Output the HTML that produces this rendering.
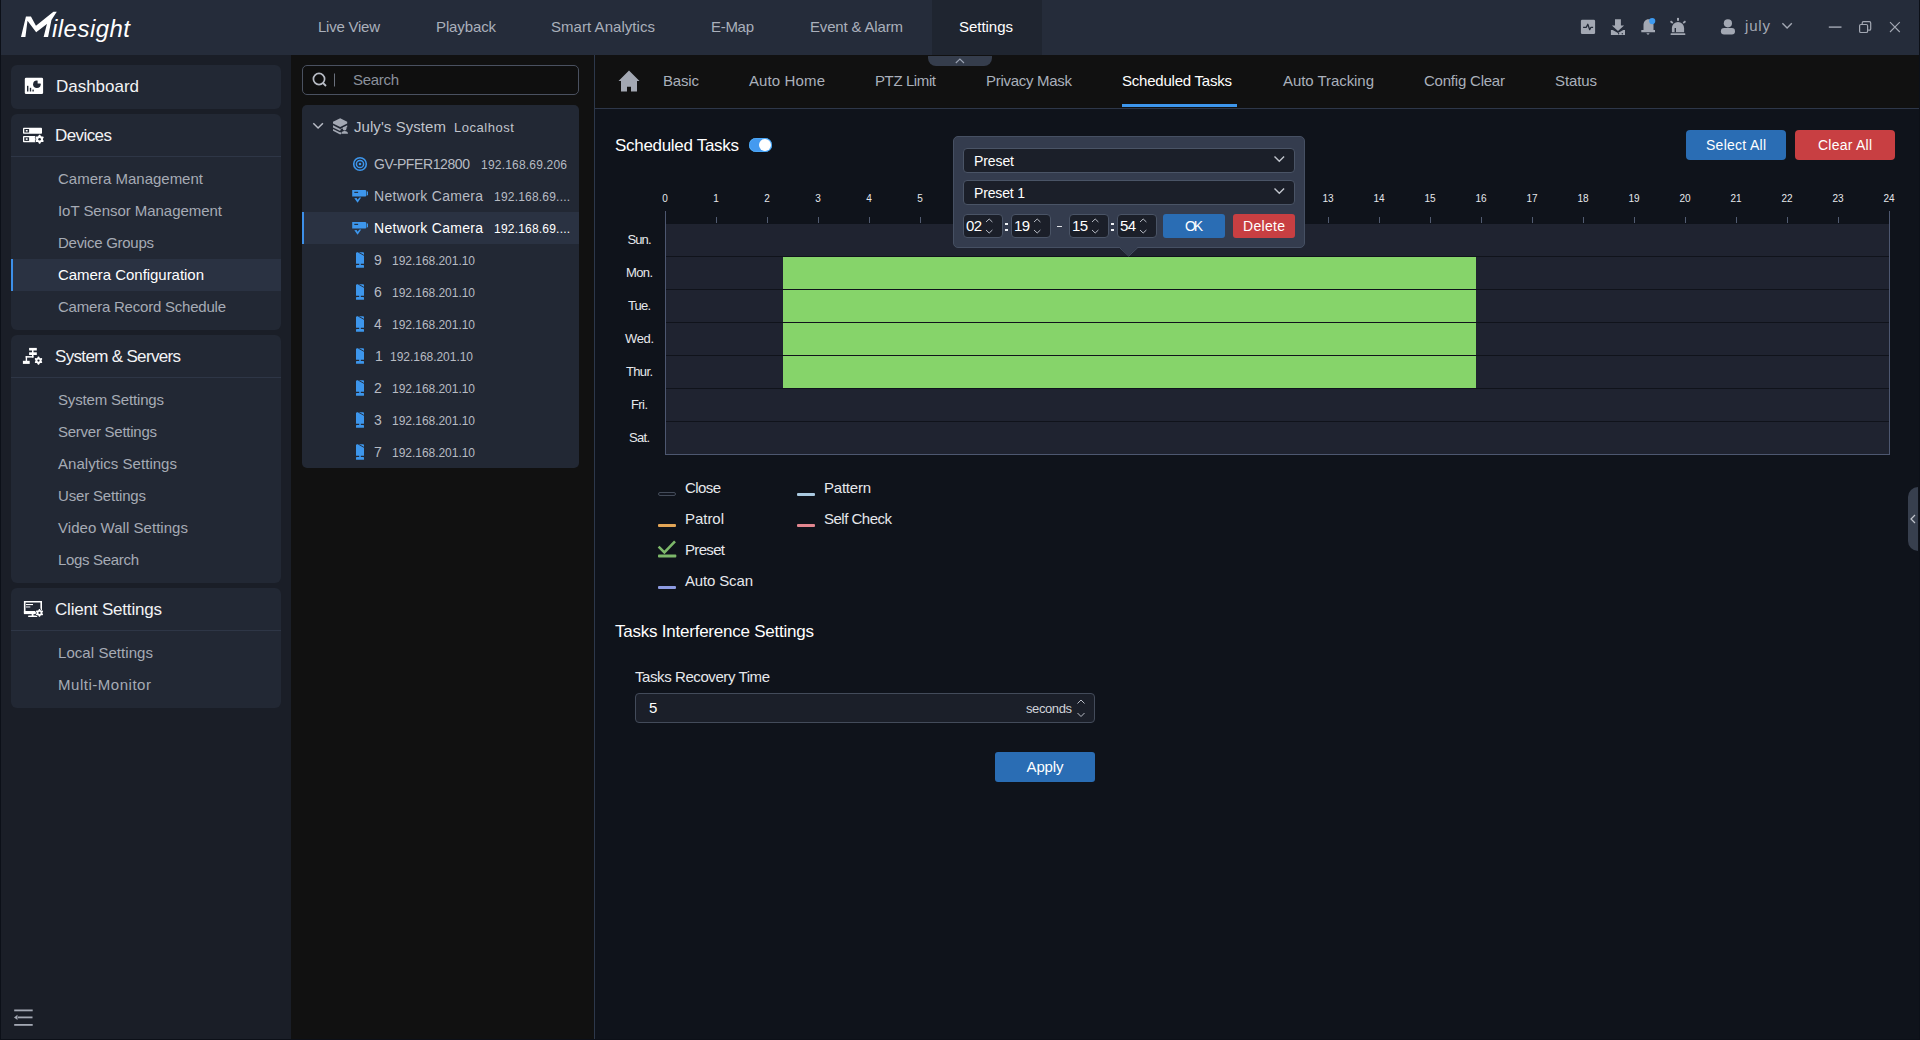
<!DOCTYPE html>
<html><head><meta charset="utf-8">
<style>
*{margin:0;padding:0;box-sizing:border-box}
html,body{width:1920px;height:1040px;overflow:hidden;background:#0f131b;font-family:"Liberation Sans",sans-serif}
.a{position:absolute}
.t{position:absolute;white-space:nowrap;line-height:1}
svg{overflow:visible}
</style></head><body>
<div class="a" style="left:0px;top:0px;width:1920px;height:55px;background:#252c3a;"></div>
<div class="a" style="left:932px;top:0px;width:110px;height:55px;background:#1f2530;"></div>
<div class="a" style="left:0px;top:55px;width:291px;height:985px;background:#1a1e27;"></div>
<div class="a" style="left:291px;top:55px;width:303px;height:985px;background:#111111;"></div>
<div class="a" style="left:594px;top:55px;width:1px;height:985px;background:#2d384b;"></div>
<div class="a" style="left:595px;top:55px;width:1325px;height:53px;background:#111111;"></div>
<div class="a" style="left:595px;top:108px;width:1325px;height:1px;background:#2e3749;"></div>
<svg class="a" style="left:15px;top:5px" width="125" height="45" viewBox="0 0 1920 691">
<path d="M92 490 L168 175 L245 175 L322 318 L590 105 L642 105 L560 232 L508 490 L440 490 L490 290 L325 418 L192 240 L160 490Z" fill="#ffffff"/>
</svg>
<div class="t" style="left:52.00px;top:17px;font-size:24px;color:#ffffff;letter-spacing:0.473px;font-style:italic;">ilesight</div>
<div class="t" style="left:318.00px;top:19px;font-size:15px;color:#aab0bb;letter-spacing:-0.240px;">Live View</div>
<div class="t" style="left:436.00px;top:19px;font-size:15px;color:#aab0bb;letter-spacing:-0.123px;">Playback</div>
<div class="t" style="left:551.00px;top:19px;font-size:15px;color:#aab0bb;letter-spacing:0.045px;">Smart Analytics</div>
<div class="t" style="left:711.00px;top:19px;font-size:15px;color:#aab0bb;letter-spacing:-0.297px;">E-Map</div>
<div class="t" style="left:810.00px;top:19px;font-size:15px;color:#aab0bb;letter-spacing:-0.171px;">Event &amp; Alarm</div>
<div class="t" style="left:959.00px;top:19px;font-size:15px;color:#ffffff;letter-spacing:-0.029px;">Settings</div>
<svg class="a" style="left:1570px;top:12px" width="130" height="30" viewBox="1570 12 130 30">
<rect x="1580.9" y="19.8" width="14.2" height="14.2" rx="1.3" fill="#a3a8b3"/>
<polyline points="1583.1,27.3 1586.3,27.3 1587.8,24.3 1589.7,29.7 1591,27.3 1593.1,27.3" fill="none" stroke="#252c3a" stroke-width="1.3" stroke-linejoin="round"/>
<path d="M1615 19.2 h5.9 v6.2 h3.2 l-6.1 5.6 l-6.1 -5.6 h3.1z" fill="#a3a8b3"/>
<path d="M1610.9 30.1 h1.8 l5.3 3.0 l5.3 -3.0 h1.7 v4.9 h-14.1z" fill="#a3a8b3"/>
<circle cx="1618.6" cy="33.7" r="0.7" fill="#252c3a"/><circle cx="1622.3" cy="33.7" r="0.7" fill="#252c3a"/>
<path d="M1648.5 19.3 c-3 0 -5 2.5 -5 6 v4.8 h-2.2 v2.2 h13.7 v-2.2 h-1.5 v-5 c0 -3.4 -2 -5.8 -5 -5.8z" fill="#a3a8b3"/>
<path d="M1646.3 33.2 h3.4 l-1.7 1.8z" fill="#a3a8b3"/>
<circle cx="1652.2" cy="21.1" r="3.1" fill="#3d9af0"/>
<path d="M1671.9 32.3 v-4.2 a6.1 6.1 0 0 1 12.2 0 v4.2z" fill="#a3a8b3"/>
<rect x="1674.6" y="28" width="1.4" height="4.3" fill="#252c3a"/>
<rect x="1670.6" y="33.2" width="14.7" height="1.8" rx="0.5" fill="#a3a8b3"/>
<rect x="1677" y="17.9" width="2" height="2.9" fill="#a3a8b3"/>
<path d="M1670.5 21.3 l2.3 1.7 M1685.5 21.3 l-2.3 1.7" stroke="#a3a8b3" stroke-width="1.7"/>
</svg>
<svg class="a" style="left:1710px;top:12px" width="200" height="30" viewBox="1710 12 200 30">
<circle cx="1727.9" cy="23.3" r="4.1" fill="#a3a8b3"/>
<rect x="1720.9" y="28.1" width="14.1" height="6.4" rx="3.2" fill="#a3a8b3"/>
<path d="M1782.4 23.3 l4.7 4.7 l4.7 -4.7" fill="none" stroke="#a3a8b3" stroke-width="1.4"/>
<rect x="1828.8" y="26.4" width="12.7" height="1.4" fill="#a3a8b3"/>
<rect x="1859.6" y="24.5" width="8" height="8" rx="1.3" fill="none" stroke="#a3a8b3" stroke-width="1.2"/>
<path d="M1862.2 23.9 v-0.9 c0 -0.8 0.6 -1.3 1.3 -1.3 h5.9 c0.8 0 1.3 0.6 1.3 1.3 v5.9 c0 0.8 -0.6 1.3 -1.3 1.3 h-1.2" fill="none" stroke="#a3a8b3" stroke-width="1.2"/>
<path d="M1890 22.2 l9.8 9.8 M1899.8 22.2 l-9.8 9.8" stroke="#a3a8b3" stroke-width="1.1"/>
</svg>
<div class="t" style="left:1745.00px;top:18px;font-size:15px;color:#a3a8b3;letter-spacing:0.833px;">july</div>
<div class="a" style="left:11px;top:65px;width:270px;height:44px;background:#222834;border-radius:6px;"></div>
<div class="a" style="left:11px;top:114px;width:270px;height:216px;background:#222834;border-radius:6px;"></div>
<div class="a" style="left:11px;top:156px;width:270px;height:1px;background:#2e3646;"></div>
<div class="a" style="left:11px;top:335px;width:270px;height:248px;background:#222834;border-radius:6px;"></div>
<div class="a" style="left:11px;top:377px;width:270px;height:1px;background:#2e3646;"></div>
<div class="a" style="left:11px;top:588px;width:270px;height:120px;background:#222834;border-radius:6px;"></div>
<div class="a" style="left:11px;top:630px;width:270px;height:1px;background:#2e3646;"></div>
<div class="a" style="left:11px;top:259px;width:270px;height:32px;background:#2a3242;"></div>
<div class="a" style="left:11px;top:259px;width:2px;height:32px;background:#3d8fe8;"></div>
<div class="t" style="left:56.00px;top:78px;font-size:17px;color:#f2f3f5;letter-spacing:-0.020px;">Dashboard</div>
<div class="t" style="left:55.00px;top:127px;font-size:17px;color:#f2f3f5;letter-spacing:-0.578px;">Devices</div>
<div class="t" style="left:55.00px;top:348px;font-size:17px;color:#f2f3f5;letter-spacing:-0.668px;">System &amp; Servers</div>
<div class="t" style="left:55.00px;top:601px;font-size:17px;color:#f2f3f5;letter-spacing:-0.186px;">Client Settings</div>
<div class="t" style="left:58.00px;top:171px;font-size:15px;color:#a6abb5;letter-spacing:-0.007px;">Camera Management</div>
<div class="t" style="left:58.00px;top:203px;font-size:15px;color:#a6abb5;letter-spacing:-0.043px;">IoT Sensor Management</div>
<div class="t" style="left:58.00px;top:235px;font-size:15px;color:#a6abb5;letter-spacing:-0.268px;">Device Groups</div>
<div class="t" style="left:58.00px;top:267px;font-size:15px;color:#ffffff;letter-spacing:-0.040px;">Camera Configuration</div>
<div class="t" style="left:58.00px;top:299px;font-size:15px;color:#a6abb5;letter-spacing:-0.219px;">Camera Record Schedule</div>
<div class="t" style="left:58.00px;top:392px;font-size:15px;color:#a6abb5;letter-spacing:-0.171px;">System Settings</div>
<div class="t" style="left:58.00px;top:424px;font-size:15px;color:#a6abb5;letter-spacing:-0.254px;">Server Settings</div>
<div class="t" style="left:58.00px;top:456px;font-size:15px;color:#a6abb5;letter-spacing:0.036px;">Analytics Settings</div>
<div class="t" style="left:58.00px;top:488px;font-size:15px;color:#a6abb5;letter-spacing:-0.171px;">User Settings</div>
<div class="t" style="left:58.00px;top:520px;font-size:15px;color:#a6abb5;letter-spacing:0.043px;">Video Wall Settings</div>
<div class="t" style="left:58.00px;top:552px;font-size:15px;color:#a6abb5;letter-spacing:-0.323px;">Logs Search</div>
<div class="t" style="left:58.00px;top:645px;font-size:15px;color:#a6abb5;letter-spacing:0.059px;">Local Settings</div>
<div class="t" style="left:58.00px;top:677px;font-size:15px;color:#a6abb5;letter-spacing:0.525px;">Multi-Monitor</div>
<svg class="a" style="left:20px;top:74px" width="30" height="24" viewBox="20 74 30 24"><rect x="24.8" y="77.7" width="18.3" height="16.3" rx="1.3" fill="#ffffff"/>
<rect x="27" y="85.8" width="1.4" height="5.7" fill="#222834"/><rect x="29.8" y="87.8" width="1.4" height="3.7" fill="#222834"/><rect x="32.4" y="89.6" width="1.4" height="1.9" fill="#222834"/>
<circle cx="36.9" cy="84.3" r="3.8" fill="#222834"/>
<path d="M37.6 83.6 v-3.6 a3.6 3.6 0 0 1 3.6 3.6z" fill="#ffffff"/></svg>
<svg class="a" style="left:20px;top:124px" width="30" height="24" viewBox="20 124 30 24"><rect x="23" y="127.7" width="19" height="6" rx="0.8" fill="#ffffff"/>
<rect x="24.3" y="129" width="4.8" height="3.5" fill="#222834"/><rect x="25.8" y="130" width="1.8" height="1.5" fill="#ffffff"/>
<rect x="23" y="136" width="13" height="6.2" rx="0.8" fill="#ffffff"/>
<rect x="24.3" y="137.3" width="4.8" height="3.6" fill="#222834"/><rect x="25.8" y="138.3" width="1.8" height="1.6" fill="#ffffff"/>
<polygon points="39.01,134.74 40.19,134.74 40.90,136.06 41.67,136.50 43.17,136.46 43.76,137.48 42.97,138.76 42.97,139.64 43.76,140.92 43.17,141.94 41.67,141.90 40.90,142.34 40.19,143.66 39.01,143.66 38.30,142.34 37.53,141.90 36.03,141.94 35.44,140.92 36.23,139.64 36.23,138.76 35.44,137.48 36.03,136.46 37.53,136.50 38.30,136.06" fill="#ffffff" stroke="#222834" stroke-width="1.2" paint-order="stroke"/><circle cx="39.6" cy="139.2" r="1.3" fill="#222834"/></svg>
<svg class="a" style="left:20px;top:344px" width="30" height="24" viewBox="20 344 30 24"><rect x="29.1" y="347.9" width="7.7" height="2.6" fill="#ffffff"/>
<rect x="29.1" y="352.3" width="7.7" height="2.7" fill="#ffffff"/>
<rect x="32" y="350" width="1.5" height="7.5" fill="#ffffff"/>
<rect x="25.7" y="356.1" width="7.8" height="1.5" fill="#ffffff"/>
<rect x="25.7" y="356.1" width="1.4" height="5" fill="#ffffff"/>
<rect x="22.9" y="360.8" width="6.8" height="3.1" fill="#ffffff"/>
<polygon points="37.96,356.54 39.04,356.54 39.69,357.74 40.39,358.14 41.75,358.10 42.29,359.03 41.57,360.20 41.57,361.00 42.29,362.17 41.75,363.10 40.39,363.06 39.69,363.46 39.04,364.66 37.96,364.66 37.31,363.46 36.61,363.06 35.25,363.10 34.71,362.17 35.43,361.00 35.43,360.20 34.71,359.03 35.25,358.10 36.61,358.14 37.31,357.74" fill="#ffffff" stroke="#222834" stroke-width="1.2" paint-order="stroke"/><circle cx="38.5" cy="360.6" r="1.1" fill="#222834"/></svg>
<svg class="a" style="left:20px;top:598px" width="30" height="24" viewBox="20 598 30 24"><path d="M24.7 601.7 h16.5 v10.5 h-16.5z" fill="none" stroke="#ffffff" stroke-width="1.6"/>
<rect x="23.9" y="611" width="18" height="3.1" fill="#ffffff"/>
<rect x="26" y="604" width="7" height="1.1" fill="#ffffff"/><rect x="26" y="606.3" width="4.3" height="1.3" fill="#c8cbd2"/>
<rect x="31.7" y="614" width="1.8" height="2" fill="#ffffff"/><rect x="28.1" y="615.6" width="9.1" height="1.4" rx="0.6" fill="#ffffff"/>
<polygon points="38.99,609.03 40.01,609.03 40.61,610.22 41.27,610.60 42.59,610.53 43.10,611.41 42.38,612.52 42.38,613.28 43.10,614.39 42.59,615.27 41.27,615.20 40.61,615.58 40.01,616.77 38.99,616.77 38.39,615.58 37.73,615.20 36.41,615.27 35.90,614.39 36.62,613.28 36.62,612.52 35.90,611.41 36.41,610.53 37.73,610.60 38.39,610.22" fill="#ffffff" stroke="#222834" stroke-width="1.2" paint-order="stroke"/><circle cx="39.5" cy="612.9" r="1.1" fill="#222834"/></svg>
<svg class="a" style="left:12px;top:1006px" width="24" height="22" viewBox="0 0 24 22">
<rect x="2.2" y="3.5" width="18.5" height="1.8" fill="#a3a8b3"/>
<rect x="6" y="10.5" width="14.5" height="1.8" fill="#a3a8b3"/>
<path d="M2 11.4 l3.5 -2.6 v5.2z" fill="#a3a8b3"/>
<rect x="2.2" y="18" width="18.5" height="1.8" fill="#a3a8b3"/>
</svg>
<div class="a" style="left:302px;top:65px;width:277px;height:30px;background:#0f0f0f;border:1px solid #4a5160;border-radius:5px;"></div>
<svg class="a" style="left:310px;top:70px" width="30" height="20" viewBox="0 0 30 20">
<circle cx="9" cy="9" r="5.6" fill="none" stroke="#b8bcc5" stroke-width="1.7"/>
<path d="M13 13 l3 3" stroke="#b8bcc5" stroke-width="1.8"/>
<rect x="24" y="3.5" width="1" height="13" fill="#6a707c"/>
</svg>
<div class="t" style="left:353.00px;top:72px;font-size:15px;color:#8b919c;letter-spacing:-0.306px;">Search</div>
<div class="a" style="left:302px;top:105px;width:277px;height:363px;background:#222834;border-radius:5px;"></div>
<div class="a" style="left:302px;top:212px;width:277px;height:32px;background:#2a3242;"></div>
<div class="a" style="left:302px;top:212px;width:2px;height:32px;background:#3d8fe8;"></div>
<svg class="a" style="left:308px;top:116px" width="44" height="20" viewBox="308 116 44 20"><path d="M313.3 123.2 l4.8 4.8 l4.8 -4.8" fill="none" stroke="#b8bcc5" stroke-width="1.5"/>
<path d="M333 121.8 l7.2 -3.6 l7 3.6 v1.6 l-7 3.6 l-7.2 -3.6z" fill="#a3a8b3"/>
<path d="M333 125.3 l7.2 3.6 l7 -3.6 v2 l-3 1.5 a2.6 2.6 0 0 0 -4 2 l-0 0.2 l-7.2 -3.6z" fill="#a3a8b3"/>
<path d="M333 128.9 l7.2 3.6 l0.8 -0.4 v2 l-0.8 0.3 l-7.2 -3.6z" fill="#a3a8b3"/>
<circle cx="344.6" cy="128.6" r="1.9" fill="#a3a8b3"/>
<path d="M341.3 133.8 c0 -2 1.3 -2.9 3.3 -2.9 c2 0 3.4 0.9 3.4 2.9z" fill="#a3a8b3"/></svg>
<div class="t" style="left:354.00px;top:119px;font-size:15px;color:#c0c4cc;letter-spacing:0.065px;">July's System</div>
<div class="t" style="left:454.00px;top:121px;font-size:13px;color:#c0c4cc;letter-spacing:0.541px;">Localhost</div>
<div class="t" style="left:374.00px;top:157px;font-size:14px;color:#b7bbc3;letter-spacing:-0.398px;">GV-PFER12800</div>
<div class="t" style="left:481.00px;top:159px;font-size:12px;color:#b7bbc3;letter-spacing:0.202px;">192.168.69.206</div>
<svg class="a" style="left:351px;top:156px" width="18" height="16" viewBox="0 0 18 16">
<circle cx="9" cy="8" r="6.3" fill="none" stroke="#3d96ec" stroke-width="1.6"/>
<circle cx="9" cy="8" r="3.6" fill="none" stroke="#3d96ec" stroke-width="1.5"/>
<circle cx="9" cy="8" r="1.3" fill="#3d96ec"/>
</svg>
<svg class="a" style="left:350px;top:189px" width="20" height="16" viewBox="350 189 20 16">
<path d="M352.2 190.1 h13.3 l0.8 0.7 v5.2 l-0.8 0.6 h-13.3z" fill="#3d96ec"/>
<rect x="366.8" y="191.5" width="1.2" height="3.8" fill="#3d96ec"/>
<rect x="354.3" y="191.8" width="3.8" height="1.1" fill="#222834"/>
<path d="M354.3 198.3 l2.3 -0.4 l0.9 1.9 l2 -2.2 l1.7 -0.2 l-3.6 5.4z" fill="#3d96ec"/>
</svg>
<div class="t" style="left:374.00px;top:189px;font-size:14px;color:#b7bbc3;letter-spacing:0.309px;">Network Camera</div>
<div class="t" style="left:494.00px;top:191px;font-size:12px;color:#b7bbc3;letter-spacing:0.204px;">192.168.69....</div>
<svg class="a" style="left:350px;top:221px" width="20" height="16" viewBox="350 189 20 16">
<path d="M352.2 190.1 h13.3 l0.8 0.7 v5.2 l-0.8 0.6 h-13.3z" fill="#3d96ec"/>
<rect x="366.8" y="191.5" width="1.2" height="3.8" fill="#3d96ec"/>
<rect x="354.3" y="191.8" width="3.8" height="1.1" fill="#222834"/>
<path d="M354.3 198.3 l2.3 -0.4 l0.9 1.9 l2 -2.2 l1.7 -0.2 l-3.6 5.4z" fill="#3d96ec"/>
</svg>
<div class="t" style="left:374.00px;top:221px;font-size:14px;color:#ffffff;letter-spacing:0.309px;">Network Camera</div>
<div class="t" style="left:494.00px;top:223px;font-size:12px;color:#ffffff;letter-spacing:0.204px;">192.168.69....</div>
<svg class="a" style="left:350px;top:250px" width="20" height="20" viewBox="350 250 20 20"><path d="M356 252.8 l1.2 -0.6 h5.6 c0.7 0 1.2 0.5 1.2 1.2 v10.4 h-8z" fill="#3d96ec"/>
<path d="M358.2 252.1 l5.8 3.3" stroke="#222834" stroke-width="0.9"/>
<rect x="359.2" y="263" width="1.6" height="2.2" fill="#3d96ec"/>
<rect x="356" y="265" width="8" height="2.8" rx="0.6" fill="#3d96ec"/></svg>
<div class="t" style="left:374.00px;top:253px;font-size:14px;color:#b7bbc3;">9</div>
<div class="t" style="left:392.00px;top:255px;font-size:12px;color:#b7bbc3;letter-spacing:-0.029px;">192.168.201.10</div>
<svg class="a" style="left:350px;top:282px" width="20" height="20" viewBox="350 282 20 20"><path d="M356 284.8 l1.2 -0.6 h5.6 c0.7 0 1.2 0.5 1.2 1.2 v10.4 h-8z" fill="#3d96ec"/>
<path d="M358.2 284.1 l5.8 3.3" stroke="#222834" stroke-width="0.9"/>
<rect x="359.2" y="295" width="1.6" height="2.2" fill="#3d96ec"/>
<rect x="356" y="297" width="8" height="2.8" rx="0.6" fill="#3d96ec"/></svg>
<div class="t" style="left:374.00px;top:285px;font-size:14px;color:#b7bbc3;">6</div>
<div class="t" style="left:392.00px;top:287px;font-size:12px;color:#b7bbc3;letter-spacing:-0.029px;">192.168.201.10</div>
<svg class="a" style="left:350px;top:314px" width="20" height="20" viewBox="350 314 20 20"><path d="M356 316.8 l1.2 -0.6 h5.6 c0.7 0 1.2 0.5 1.2 1.2 v10.4 h-8z" fill="#3d96ec"/>
<path d="M358.2 316.1 l5.8 3.3" stroke="#222834" stroke-width="0.9"/>
<rect x="359.2" y="327" width="1.6" height="2.2" fill="#3d96ec"/>
<rect x="356" y="329" width="8" height="2.8" rx="0.6" fill="#3d96ec"/></svg>
<div class="t" style="left:374.00px;top:317px;font-size:14px;color:#b7bbc3;">4</div>
<div class="t" style="left:392.00px;top:319px;font-size:12px;color:#b7bbc3;letter-spacing:-0.029px;">192.168.201.10</div>
<svg class="a" style="left:350px;top:346px" width="20" height="20" viewBox="350 346 20 20"><path d="M356 348.8 l1.2 -0.6 h5.6 c0.7 0 1.2 0.5 1.2 1.2 v10.4 h-8z" fill="#3d96ec"/>
<path d="M358.2 348.1 l5.8 3.3" stroke="#222834" stroke-width="0.9"/>
<rect x="359.2" y="359" width="1.6" height="2.2" fill="#3d96ec"/>
<rect x="356" y="361" width="8" height="2.8" rx="0.6" fill="#3d96ec"/></svg>
<div class="t" style="left:375.00px;top:349px;font-size:14px;color:#b7bbc3;">1</div>
<div class="t" style="left:390.00px;top:351px;font-size:12px;color:#b7bbc3;letter-spacing:-0.029px;">192.168.201.10</div>
<svg class="a" style="left:350px;top:378px" width="20" height="20" viewBox="350 378 20 20"><path d="M356 380.8 l1.2 -0.6 h5.6 c0.7 0 1.2 0.5 1.2 1.2 v10.4 h-8z" fill="#3d96ec"/>
<path d="M358.2 380.1 l5.8 3.3" stroke="#222834" stroke-width="0.9"/>
<rect x="359.2" y="391" width="1.6" height="2.2" fill="#3d96ec"/>
<rect x="356" y="393" width="8" height="2.8" rx="0.6" fill="#3d96ec"/></svg>
<div class="t" style="left:374.00px;top:381px;font-size:14px;color:#b7bbc3;">2</div>
<div class="t" style="left:392.00px;top:383px;font-size:12px;color:#b7bbc3;letter-spacing:-0.029px;">192.168.201.10</div>
<svg class="a" style="left:350px;top:410px" width="20" height="20" viewBox="350 410 20 20"><path d="M356 412.8 l1.2 -0.6 h5.6 c0.7 0 1.2 0.5 1.2 1.2 v10.4 h-8z" fill="#3d96ec"/>
<path d="M358.2 412.1 l5.8 3.3" stroke="#222834" stroke-width="0.9"/>
<rect x="359.2" y="423" width="1.6" height="2.2" fill="#3d96ec"/>
<rect x="356" y="425" width="8" height="2.8" rx="0.6" fill="#3d96ec"/></svg>
<div class="t" style="left:374.00px;top:413px;font-size:14px;color:#b7bbc3;">3</div>
<div class="t" style="left:392.00px;top:415px;font-size:12px;color:#b7bbc3;letter-spacing:-0.029px;">192.168.201.10</div>
<svg class="a" style="left:350px;top:442px" width="20" height="20" viewBox="350 442 20 20"><path d="M356 444.8 l1.2 -0.6 h5.6 c0.7 0 1.2 0.5 1.2 1.2 v10.4 h-8z" fill="#3d96ec"/>
<path d="M358.2 444.1 l5.8 3.3" stroke="#222834" stroke-width="0.9"/>
<rect x="359.2" y="455" width="1.6" height="2.2" fill="#3d96ec"/>
<rect x="356" y="457" width="8" height="2.8" rx="0.6" fill="#3d96ec"/></svg>
<div class="t" style="left:374.00px;top:445px;font-size:14px;color:#b7bbc3;">7</div>
<div class="t" style="left:392.00px;top:447px;font-size:12px;color:#b7bbc3;letter-spacing:-0.029px;">192.168.201.10</div>
<svg class="a" style="left:616px;top:68px" width="26" height="26" viewBox="0 0 26 26">
<path d="M13 2.5 l10.5 10.5 h-2.5 v10.5 h-6 v-4.8 h-4 v4.8 h-6 v-10.5 h-2.5z" fill="#a3a8b3"/>
</svg>
<div class="t" style="left:663.00px;top:73px;font-size:15px;color:#aab0bb;letter-spacing:-0.168px;">Basic</div>
<div class="t" style="left:749.00px;top:73px;font-size:15px;color:#aab0bb;letter-spacing:0.119px;">Auto Home</div>
<div class="t" style="left:875.00px;top:73px;font-size:15px;color:#aab0bb;letter-spacing:-0.395px;">PTZ Limit</div>
<div class="t" style="left:986.00px;top:73px;font-size:15px;color:#aab0bb;letter-spacing:-0.290px;">Privacy Mask</div>
<div class="t" style="left:1122.00px;top:73px;font-size:15px;color:#ffffff;letter-spacing:-0.224px;">Scheduled Tasks</div>
<div class="t" style="left:1283.00px;top:73px;font-size:15px;color:#aab0bb;letter-spacing:-0.060px;">Auto Tracking</div>
<div class="t" style="left:1424.00px;top:73px;font-size:15px;color:#aab0bb;letter-spacing:-0.216px;">Config Clear</div>
<div class="t" style="left:1555.00px;top:73px;font-size:15px;color:#aab0bb;letter-spacing:-0.106px;">Status</div>
<div class="a" style="left:1122px;top:104px;width:115px;height:3px;background:#3d96ec;"></div>
<svg class="a" style="left:928px;top:56px" width="64" height="10" viewBox="928 56 64 10">
<path d="M928 56 h64 v2 a8 8 0 0 1 -8 8 h-48 a8 8 0 0 1 -8 -8z" fill="#353d4c"/>
<path d="M955.8 63 l4.1 -4 l4.1 4" fill="none" stroke="#9ba3b3" stroke-width="1.1"/>
</svg>
<div class="t" style="left:615.00px;top:137px;font-size:17px;color:#ffffff;letter-spacing:-0.300px;">Scheduled Tasks</div>
<div class="a" style="left:749px;top:138px;width:23px;height:14px;background:#449af0;border-radius:7px;box-shadow:inset 0 0 0 0.6px #52b4ff;"></div>
<div class="a" style="left:759px;top:139px;width:12px;height:12px;background:#ffffff;border-radius:6px;"></div>
<div class="a" style="left:1686px;top:130px;width:100px;height:30px;background:#2a6db4;border-radius:4px;"></div>
<div class="t" style="left:1706.00px;top:138px;font-size:14px;color:#ffffff;letter-spacing:0.267px;">Select All</div>
<div class="a" style="left:1795px;top:130px;width:100px;height:30px;background:#c83f42;border-radius:4px;"></div>
<div class="t" style="left:1818.00px;top:138px;font-size:14px;color:#ffffff;letter-spacing:0.234px;">Clear All</div>
<div class="t" style="left:662.22px;top:194px;font-size:10px;color:#e6e8ec;">0</div>
<div class="t" style="left:713.22px;top:194px;font-size:10px;color:#e6e8ec;">1</div>
<div class="a" style="left:716px;top:217px;width:1px;height:6px;background:#525c72;"></div>
<div class="t" style="left:764.22px;top:194px;font-size:10px;color:#e6e8ec;">2</div>
<div class="a" style="left:767px;top:217px;width:1px;height:6px;background:#525c72;"></div>
<div class="t" style="left:815.22px;top:194px;font-size:10px;color:#e6e8ec;">3</div>
<div class="a" style="left:818px;top:217px;width:1px;height:6px;background:#525c72;"></div>
<div class="t" style="left:866.22px;top:194px;font-size:10px;color:#e6e8ec;">4</div>
<div class="a" style="left:869px;top:217px;width:1px;height:6px;background:#525c72;"></div>
<div class="t" style="left:917.22px;top:194px;font-size:10px;color:#e6e8ec;">5</div>
<div class="a" style="left:920px;top:217px;width:1px;height:6px;background:#525c72;"></div>
<div class="t" style="left:968.22px;top:194px;font-size:10px;color:#e6e8ec;">6</div>
<div class="a" style="left:971px;top:217px;width:1px;height:6px;background:#525c72;"></div>
<div class="t" style="left:1019.22px;top:194px;font-size:10px;color:#e6e8ec;">7</div>
<div class="a" style="left:1022px;top:217px;width:1px;height:6px;background:#525c72;"></div>
<div class="t" style="left:1070.22px;top:194px;font-size:10px;color:#e6e8ec;">8</div>
<div class="a" style="left:1073px;top:217px;width:1px;height:6px;background:#525c72;"></div>
<div class="t" style="left:1121.22px;top:194px;font-size:10px;color:#e6e8ec;">9</div>
<div class="a" style="left:1124px;top:217px;width:1px;height:6px;background:#525c72;"></div>
<div class="t" style="left:1169.44px;top:194px;font-size:10px;color:#e6e8ec;">10</div>
<div class="a" style="left:1175px;top:217px;width:1px;height:6px;background:#525c72;"></div>
<div class="t" style="left:1220.80px;top:194px;font-size:10px;color:#e6e8ec;">11</div>
<div class="a" style="left:1226px;top:217px;width:1px;height:6px;background:#525c72;"></div>
<div class="t" style="left:1271.44px;top:194px;font-size:10px;color:#e6e8ec;">12</div>
<div class="a" style="left:1277px;top:217px;width:1px;height:6px;background:#525c72;"></div>
<div class="t" style="left:1322.44px;top:194px;font-size:10px;color:#e6e8ec;">13</div>
<div class="a" style="left:1328px;top:217px;width:1px;height:6px;background:#525c72;"></div>
<div class="t" style="left:1373.44px;top:194px;font-size:10px;color:#e6e8ec;">14</div>
<div class="a" style="left:1379px;top:217px;width:1px;height:6px;background:#525c72;"></div>
<div class="t" style="left:1424.44px;top:194px;font-size:10px;color:#e6e8ec;">15</div>
<div class="a" style="left:1430px;top:217px;width:1px;height:6px;background:#525c72;"></div>
<div class="t" style="left:1475.44px;top:194px;font-size:10px;color:#e6e8ec;">16</div>
<div class="a" style="left:1481px;top:217px;width:1px;height:6px;background:#525c72;"></div>
<div class="t" style="left:1526.44px;top:194px;font-size:10px;color:#e6e8ec;">17</div>
<div class="a" style="left:1532px;top:217px;width:1px;height:6px;background:#525c72;"></div>
<div class="t" style="left:1577.44px;top:194px;font-size:10px;color:#e6e8ec;">18</div>
<div class="a" style="left:1583px;top:217px;width:1px;height:6px;background:#525c72;"></div>
<div class="t" style="left:1628.44px;top:194px;font-size:10px;color:#e6e8ec;">19</div>
<div class="a" style="left:1634px;top:217px;width:1px;height:6px;background:#525c72;"></div>
<div class="t" style="left:1679.44px;top:194px;font-size:10px;color:#e6e8ec;">20</div>
<div class="a" style="left:1685px;top:217px;width:1px;height:6px;background:#525c72;"></div>
<div class="t" style="left:1730.44px;top:194px;font-size:10px;color:#e6e8ec;">21</div>
<div class="a" style="left:1736px;top:217px;width:1px;height:6px;background:#525c72;"></div>
<div class="t" style="left:1781.44px;top:194px;font-size:10px;color:#e6e8ec;">22</div>
<div class="a" style="left:1787px;top:217px;width:1px;height:6px;background:#525c72;"></div>
<div class="t" style="left:1832.44px;top:194px;font-size:10px;color:#e6e8ec;">23</div>
<div class="a" style="left:1838px;top:217px;width:1px;height:6px;background:#525c72;"></div>
<div class="t" style="left:1883.44px;top:194px;font-size:10px;color:#e6e8ec;">24</div>
<div class="a" style="left:665px;top:211px;width:1px;height:244px;background:#4d5770;"></div>
<div class="a" style="left:1889px;top:211px;width:1px;height:244px;background:#4d5770;"></div>
<div class="a" style="left:666px;top:224px;width:1223px;height:230px;background:#1f2330;"></div>
<div class="a" style="left:666px;top:256px;width:1223px;height:1px;background:#10131b;"></div>
<div class="a" style="left:666px;top:289px;width:1223px;height:1px;background:#10131b;"></div>
<div class="a" style="left:666px;top:322px;width:1223px;height:1px;background:#10131b;"></div>
<div class="a" style="left:666px;top:355px;width:1223px;height:1px;background:#10131b;"></div>
<div class="a" style="left:666px;top:388px;width:1223px;height:1px;background:#10131b;"></div>
<div class="a" style="left:666px;top:421px;width:1223px;height:1px;background:#10131b;"></div>
<div class="a" style="left:665px;top:454px;width:1225px;height:1px;background:#4d5770;"></div>
<div class="a" style="left:783px;top:257px;width:693px;height:32px;background:#86d46a;"></div>
<div class="a" style="left:783px;top:290px;width:693px;height:32px;background:#86d46a;"></div>
<div class="a" style="left:783px;top:323px;width:693px;height:32px;background:#86d46a;"></div>
<div class="a" style="left:783px;top:356px;width:693px;height:32px;background:#86d46a;"></div>
<div class="t" style="left:627.50px;top:233px;font-size:13px;color:#e6e8ec;letter-spacing:-0.917px;">Sun.</div>
<div class="t" style="left:626.00px;top:266px;font-size:13px;color:#e6e8ec;letter-spacing:-0.635px;">Mon.</div>
<div class="t" style="left:628.00px;top:299px;font-size:13px;color:#e6e8ec;letter-spacing:-0.844px;">Tue.</div>
<div class="t" style="left:625.00px;top:332px;font-size:13px;color:#e6e8ec;letter-spacing:-0.370px;">Wed.</div>
<div class="t" style="left:626.00px;top:365px;font-size:13px;color:#e6e8ec;letter-spacing:-0.656px;">Thur.</div>
<div class="t" style="left:631.00px;top:398px;font-size:13px;color:#e6e8ec;letter-spacing:-0.589px;">Fri.</div>
<div class="t" style="left:629.00px;top:431px;font-size:13px;color:#e6e8ec;letter-spacing:-0.708px;">Sat.</div>
<div class="a" style="left:953px;top:136px;width:352px;height:112px;background:#343c4e;border:1px solid #465063;border-radius:5px"></div>
<svg class="a" style="left:1115px;top:240px" width="28" height="20" viewBox="1115 240 28 20">
<path d="M1119.5 247 l9.2 8.6 l9.2 -8.6z" fill="#343c4e"/>
<path d="M1119.5 247.5 l9.2 8.6 l9.2 -8.6" fill="none" stroke="#465063" stroke-width="1"/>
<rect x="1120.5" y="246" width="16.5" height="2" fill="#343c4e"/>
</svg>
<div class="a" style="left:963px;top:148px;width:332px;height:25px;background:#1b1f29;border:1px solid #4a5466;border-radius:4px;"></div>
<div class="a" style="left:963px;top:180px;width:332px;height:25px;background:#1b1f29;border:1px solid #4a5466;border-radius:4px;"></div>
<div class="t" style="left:974.00px;top:154px;font-size:14px;color:#ffffff;letter-spacing:-0.091px;">Preset</div>
<div class="t" style="left:974.00px;top:186px;font-size:14px;color:#ffffff;letter-spacing:-0.161px;">Preset 1</div>
<svg class="a" style="left:1272px;top:154px" width="14" height="44" viewBox="0 0 14 44">
<path d="M2.5 2.5 l4.8 4.8 l4.8 -4.8" fill="none" stroke="#c0c4cc" stroke-width="1.4"/>
<path d="M2.5 34.5 l4.8 4.8 l4.8 -4.8" fill="none" stroke="#c0c4cc" stroke-width="1.4"/>
</svg>
<div class="a" style="left:963px;top:214px;width:40px;height:24px;background:#1b1f29;border:1px solid #4a5466;border-radius:4px;"></div>
<div class="t" style="left:966.00px;top:218px;font-size:15px;color:#ffffff;letter-spacing:-0.688px;">02</div>
<svg class="a" style="left:981px;top:214px" width="14" height="24" viewBox="981 214 14 24"><path d="M986 222 l3.2 -3 l3.2 3 M986 230 l3.2 3 l3.2 -3" fill="none" stroke="#b8bcc5" stroke-width="1"/></svg>
<div class="a" style="left:1011px;top:214px;width:40px;height:24px;background:#1b1f29;border:1px solid #4a5466;border-radius:4px;"></div>
<div class="t" style="left:1014.00px;top:218px;font-size:15px;color:#ffffff;letter-spacing:-0.688px;">19</div>
<svg class="a" style="left:1029px;top:214px" width="14" height="24" viewBox="1029 214 14 24"><path d="M1034 222 l3.2 -3 l3.2 3 M1034 230 l3.2 3 l3.2 -3" fill="none" stroke="#b8bcc5" stroke-width="1"/></svg>
<div class="a" style="left:1069px;top:214px;width:40px;height:24px;background:#1b1f29;border:1px solid #4a5466;border-radius:4px;"></div>
<div class="t" style="left:1072.00px;top:218px;font-size:15px;color:#ffffff;letter-spacing:-0.688px;">15</div>
<svg class="a" style="left:1087px;top:214px" width="14" height="24" viewBox="1087 214 14 24"><path d="M1092 222 l3.2 -3 l3.2 3 M1092 230 l3.2 3 l3.2 -3" fill="none" stroke="#b8bcc5" stroke-width="1"/></svg>
<div class="a" style="left:1117px;top:214px;width:40px;height:24px;background:#1b1f29;border:1px solid #4a5466;border-radius:4px;"></div>
<div class="t" style="left:1120.00px;top:218px;font-size:15px;color:#ffffff;letter-spacing:-0.688px;">54</div>
<svg class="a" style="left:1135px;top:214px" width="14" height="24" viewBox="1135 214 14 24"><path d="M1140 222 l3.2 -3 l3.2 3 M1140 230 l3.2 3 l3.2 -3" fill="none" stroke="#b8bcc5" stroke-width="1"/></svg>
<div class="a" style="left:1005px;top:223px;width:3px;height:2px;background:#f0f2f5;"></div>
<div class="a" style="left:1005px;top:229px;width:3px;height:2px;background:#f0f2f5;"></div>
<div class="a" style="left:1111px;top:223px;width:3px;height:2px;background:#f0f2f5;"></div>
<div class="a" style="left:1111px;top:229px;width:3px;height:2px;background:#f0f2f5;"></div>
<div class="a" style="left:1057px;top:226px;width:5px;height:1px;background:#e0e2e6;"></div>
<div class="a" style="left:1163px;top:214px;width:62px;height:24px;background:#2a6db4;border-radius:3px;"></div>
<div class="t" style="left:1185.00px;top:219px;font-size:14px;color:#ffffff;letter-spacing:-2.234px;">OK</div>
<div class="a" style="left:1233px;top:214px;width:62px;height:24px;background:#c83f42;border-radius:3px;"></div>
<div class="t" style="left:1243.00px;top:219px;font-size:14px;color:#ffffff;letter-spacing:0.309px;">Delete</div>
<div class="a" style="left:658px;top:524px;width:18px;height:3px;background:#e2a556;border-radius:1px;"></div>
<div class="t" style="left:685.00px;top:511px;font-size:15px;color:#e6e8ec;letter-spacing:-0.037px;">Patrol</div>
<div class="a" style="left:658px;top:586px;width:18px;height:3px;background:#8d9be2;border-radius:1px;"></div>
<div class="t" style="left:685.00px;top:573px;font-size:15px;color:#e6e8ec;letter-spacing:-0.152px;">Auto Scan</div>
<div class="a" style="left:797px;top:493px;width:18px;height:3px;background:#aac9e0;border-radius:1px;"></div>
<div class="t" style="left:824.00px;top:480px;font-size:15px;color:#e6e8ec;letter-spacing:-0.229px;">Pattern</div>
<div class="a" style="left:797px;top:524px;width:18px;height:3px;background:#e2868f;border-radius:1px;"></div>
<div class="t" style="left:824.00px;top:511px;font-size:15px;color:#e6e8ec;letter-spacing:-0.503px;">Self Check</div>
<div class="t" style="left:685.00px;top:480px;font-size:15px;color:#e6e8ec;letter-spacing:-0.586px;">Close</div>
<div class="a" style="left:658px;top:492px;width:18px;height:4px;background:#121620;border:1px solid #434b59;border-radius:2px;"></div>
<svg class="a" style="left:650px;top:535px" width="30" height="26" viewBox="650 535 30 26">
<path d="M658.6 546.6 l5.8 5.8 l10.6 -11.1" fill="none" stroke="#7db86a" stroke-width="2.6"/>
<rect x="658" y="554.6" width="18.3" height="3" rx="0.8" fill="#7db86a"/>
</svg>
<div class="t" style="left:685.00px;top:542px;font-size:15px;color:#e6e8ec;letter-spacing:-0.672px;">Preset</div>
<div class="t" style="left:615.00px;top:623px;font-size:17px;color:#ffffff;letter-spacing:-0.231px;">Tasks Interference Settings</div>
<div class="t" style="left:635.00px;top:669px;font-size:15px;color:#e6e8ec;letter-spacing:-0.419px;">Tasks Recovery Time</div>
<div class="a" style="left:635px;top:693px;width:460px;height:30px;background:#1b1f29;border:1px solid #434b5a;border-radius:4px;"></div>
<div class="t" style="left:649.00px;top:700px;font-size:15px;color:#ffffff;">5</div>
<div class="t" style="left:1026.00px;top:702px;font-size:13px;color:#d0d3d9;letter-spacing:-0.406px;">seconds</div>
<svg class="a" style="left:1075px;top:697px" width="12" height="22" viewBox="0 0 12 22">
<path d="M2.5 6.5 l3.5 -3.5 l3.5 3.5 M2.5 16 l3.5 3.5 l3.5 -3.5" fill="none" stroke="#b8bcc5" stroke-width="1"/>
</svg>
<div class="a" style="left:995px;top:752px;width:100px;height:30px;background:#2a6db4;border-radius:3px;"></div>
<div class="t" style="left:1026.50px;top:759px;font-size:15px;color:#ffffff;letter-spacing:-0.129px;">Apply</div>
<svg class="a" style="left:1907px;top:487px" width="13" height="64" viewBox="0 0 13 64">
<path d="M11 0 v64 a10 10 0 0 1 -10 -10 v-44 a10 10 0 0 1 10 -10z" fill="#373f4e"/>
<path d="M8 28 l-4 4 l4 4" fill="none" stroke="#c0c4cc" stroke-width="1.2"/>
</svg>
<div class="a" style="left:0px;top:0px;width:1px;height:1040px;background:#0c1018;"></div>
<div class="a" style="left:1919px;top:0px;width:1px;height:1040px;background:#0c1018;"></div>
<div class="a" style="left:0px;top:1039px;width:1920px;height:1px;background:#0c1018;"></div>
</body></html>
